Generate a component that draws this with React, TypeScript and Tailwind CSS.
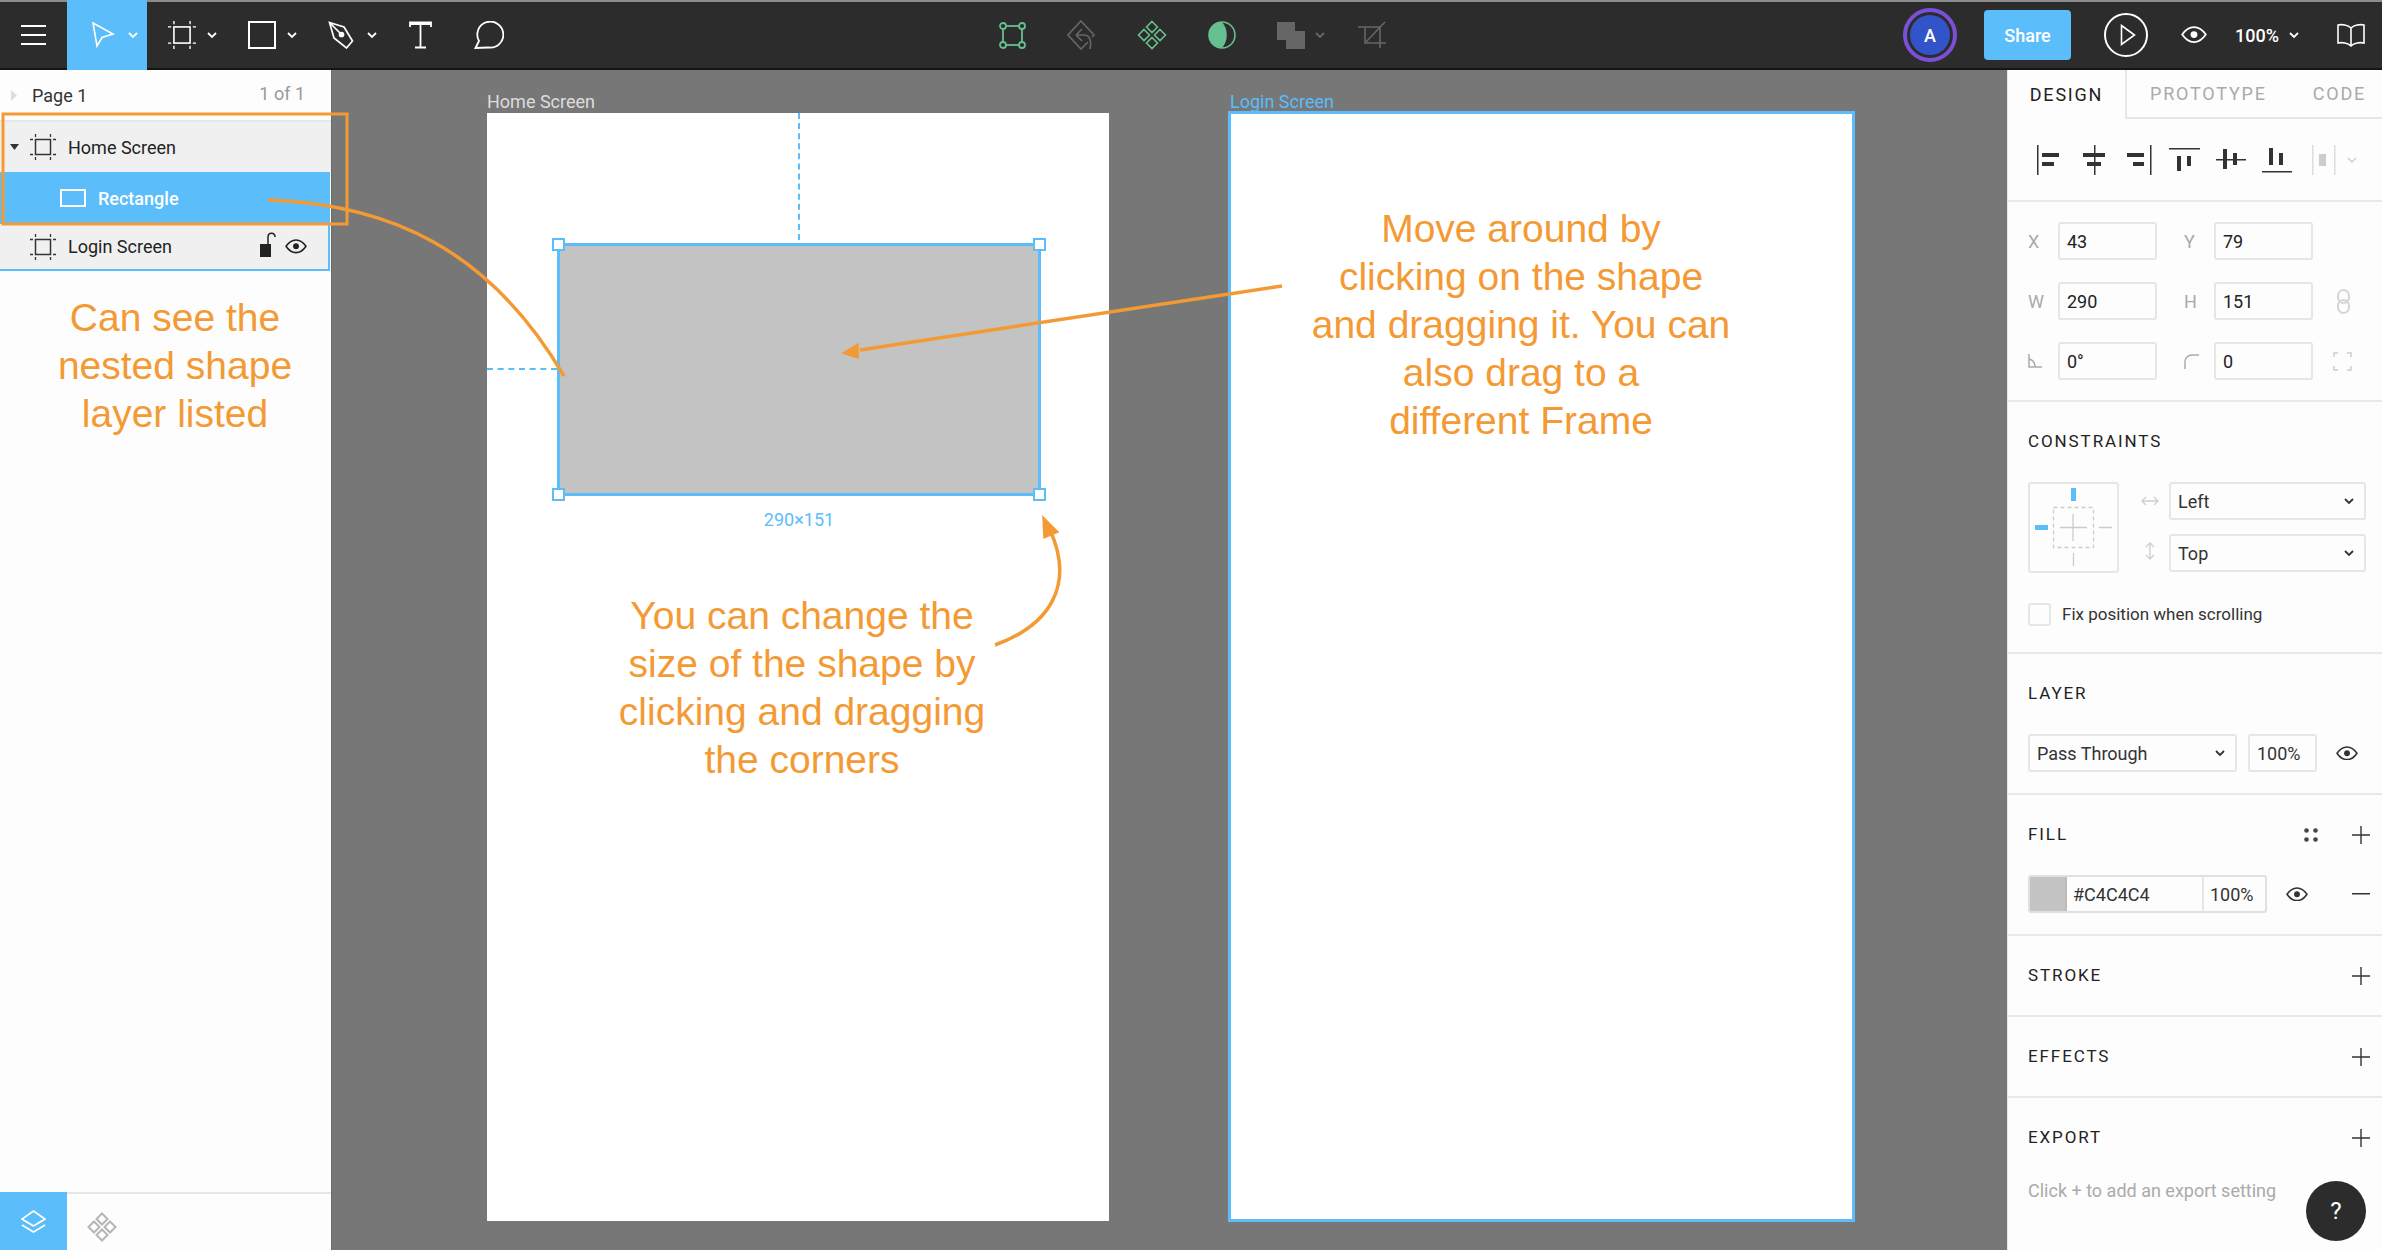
import React from "react";

const Chev = ({ c = "#ffffff", className = "" }: { c?: string; className?: string }) => (
  <svg width="10" height="7" viewBox="0 0 10 7" className={className} fill="none" stroke={c} strokeWidth="1.8">
    <path d="M1 1l4 4 4-4" />
  </svg>
);

const Eye = ({ c = "#333333", w = 22 }: { c?: string; w?: number }) => (
  <svg width={w} height={w * 0.66} viewBox="0 0 24 16" fill="none" stroke={c} strokeWidth="1.7">
    <path d="M1 8c3-4.5 7-7 11-7s8 2.500 11 7c-3 4.500-7 7-11 7S4 12.500 1 8z" />
    <circle cx="12" cy="8" r="3.200" fill={c} stroke="none" />
  </svg>
);

const Plus = () => (
  <svg width="18" height="18" viewBox="0 0 18 18" stroke="#333333" strokeWidth="1.400">
    <path d="M0 9h18M9 0v18" />
  </svg>
);

const FrameIcon = ({ c, s }: { c: string; s: number }) => (
  <svg width={s} height={s} viewBox="0 0 26 26" fill="none" stroke={c} strokeWidth="1.300">
    <rect x="5.500" y="5.500" width="15" height="15" strokeWidth="1.500" />
    <path d="M5.500 0v3M20.500 0v3M5.500 23v3M20.500 23v3M0 5.500h3M0 20.500h3M23 5.500h3M23 20.500h3" />
  </svg>
);

const Diamonds = ({ c, s, sw = 1.6 }: { c: string; s: number; sw?: number }) => (
  <svg width={s} height={s} viewBox="0 0 30 30" fill="none" stroke={c} strokeWidth={sw}>
    <path d="M15 1.500l5.500 5.500-5.500 5.500L9.500 7zM15 17.500l5.500 5.500-5.500 5.500L9.500 23zM7 9.500l5.500 5.500L7 20.500 1.500 15zM23 9.500l5.500 5.500-5.500 5.500L17.500 15z" />
  </svg>
);

const Label = ({ children }: { children: React.ReactNode }) => (
  <span className="w-[30px] text-[18px] text-[#aaaaaa]">{children}</span>
);

const Field = ({ children }: { children: React.ReactNode }) => (
  <div className="flex h-[38px] w-[99px] items-center rounded-[3px] border-2 border-[#e6e6e6] pl-[7px] text-[18px] text-[#222222]">
    {children}
  </div>
);

const SelectBox = ({ children, className }: { children: React.ReactNode; className: string }) => (
  <div className={`flex items-center justify-between rounded-[3px] border-2 border-[#e6e6e6] pl-[7px] pr-[10px] text-[18px] text-[#333333] ${className}`}>
    <span>{children}</span>
    <Chev c="#333333" />
  </div>
);

const Title = ({ children, right }: { children: React.ReactNode; right?: React.ReactNode }) => (
  <div className="flex h-[80px] items-center justify-between pr-[12px] text-[17px] font-normal tracking-[1.900px] text-[#222222]">
    <span>{children}</span>
    {right}
  </div>
);

const Row = ({ className, children }: { className: string; children: React.ReactNode }) => (
  <div className={`flex items-center text-[18px] ${className}`}>{children}</div>
);

export default function App() {
  return (
    <div className="relative flex h-[1250px] w-[2382px] flex-col overflow-hidden bg-[#777777] font-['Roboto',sans-serif]">
      {/* Top bar */}
      <header className="flex h-[70px] shrink-0 items-stretch border-t-2 border-b-2 border-t-[#8c8c8c] border-b-[#151515] bg-[#2c2c2c]">
        <div className="flex w-[67px] items-center justify-center pr-[1px]">
          <svg width="25" height="22" viewBox="0 0 25 22" stroke="#ffffff" strokeWidth="2.200">
            <path d="M0 2h25M0 11h25M0 20h25" />
          </svg>
        </div>
        <div className="flex w-[80px] -mb-[2px] -mt-[2px] items-center bg-[#5bbdfa] pl-[24px]">
          <svg width="24" height="26" viewBox="0 0 24 26" fill="none" stroke="#ffffff" strokeWidth="1.600">
            <path d="M2 1l20 11-11 3.500L6 24z" />
          </svg>
          <Chev className="ml-[13px]" />
        </div>
        <div className="flex items-center pl-[21px]">
          <div className="flex w-[80px] items-center">
            <FrameIcon c="#ffffff" s={28} />
            <Chev className="ml-[11px]" />
          </div>
          <div className="flex w-[80px] items-center">
            <svg width="28" height="28" viewBox="0 0 28 28" fill="none" stroke="#ffffff" strokeWidth="2">
              <rect x="1" y="1" width="26" height="26" />
            </svg>
            <Chev className="ml-[11px]" />
          </div>
          <div className="flex w-[81px] items-center">
            <svg width="28" height="28" viewBox="0 0 28 28" fill="none" stroke="#ffffff" strokeWidth="1.700">
              <path d="M1.500 1.500L16 6l8.500 14-6 7L6 17zM1.500 1.500L13 13" />
              <circle cx="13.500" cy="13.500" r="2" fill="#ffffff" />
            </svg>
            <Chev className="ml-[11px]" />
          </div>
          <div className="flex w-[65px] items-center">
            <svg width="23" height="28" viewBox="0 0 23 28" fill="none" stroke="#ffffff" strokeWidth="1.800">
              <path d="M1 6V1.500h21V6M1 3h21M11.500 2v25M6 26.500h11" />
            </svg>
          </div>
          <svg width="30" height="28" viewBox="0 0 30 28" fill="none" stroke="#ffffff" strokeWidth="1.800">
            <path d="M1.500 27l3.500-7a13 13 0 1 1 9.500 6.500z" />
          </svg>
        </div>
        <div className="ml-[495px] flex items-center">
          <div className="w-[68px]">
            <svg width="27" height="27" viewBox="0 0 27 27" fill="none" stroke="#66bf8f" strokeWidth="1.800">
              <rect x="4" y="4" width="19" height="19" />
              <circle cx="4" cy="4" r="3" fill="#2c2c2c" />
              <circle cx="23" cy="4" r="3" fill="#2c2c2c" />
              <circle cx="4" cy="23" r="3" fill="#2c2c2c" />
              <circle cx="23" cy="23" r="3" fill="#2c2c2c" />
            </svg>
          </div>
          <div className="w-[70px]">
            <svg width="29" height="30" viewBox="0 0 29 30" fill="none" stroke="#666666" strokeWidth="1.700">
              <path d="M21 22l-7 7L1 15 14 1l13 14-2 2M9 15l6-6M9 15l6 6M9 15h8c5 0 8 5 6 14" />
            </svg>
          </div>
          <div className="w-[71px]">
            <Diamonds c="#66bf8f" s={30} />
          </div>
          <div className="w-[69px]">
            <svg width="28" height="28" viewBox="0 0 28 28" fill="none">
              <circle cx="14" cy="14" r="13" stroke="#66bf8f" strokeWidth="1.600" />
              <path d="M14 1a13 13 0 0 0 0 26a20 20 0 0 0 0-26z" fill="#66bf8f" />
            </svg>
          </div>
          <div className="flex w-[81px] items-center">
            <svg width="28" height="27" viewBox="0 0 28 27" fill="#666666">
              <rect x="0" y="0" width="18" height="18" />
              <rect x="9" y="9" width="19" height="18" />
            </svg>
            <Chev c="#666666" className="ml-[10px]" />
          </div>
          <svg width="28" height="28" viewBox="0 0 28 28" fill="none" stroke="#666666" strokeWidth="1.600">
            <path d="M0 6h22v21M7 6v16h21M7 22L27 1" />
          </svg>
        </div>
        <div className="ml-auto flex items-center pr-[16px]">
          <div className="flex h-[54px] w-[54px] items-center justify-center rounded-full border-[4px] border-[#7b50d8]">
            <div className="flex h-[40px] w-[40px] items-center justify-center rounded-full bg-[#3254c8] text-[18px] font-medium text-white">A</div>
          </div>
          <div className="ml-[27px] flex h-[50px] w-[87px] items-center justify-center rounded-[4px] bg-[#5bbdfa] text-[18px] font-medium text-white">Share</div>
          <div className="ml-[33px] flex h-[44px] w-[44px] items-center justify-center rounded-full border-2 border-white pl-[3px]">
            <svg width="16" height="22" viewBox="0 0 16 22" fill="none" stroke="#ffffff" strokeWidth="1.600">
              <path d="M1.500 1.500L14.500 11 1.500 20.500z" />
            </svg>
          </div>
          <div className="ml-[33px]">
            <Eye c="#ffffff" w={26} />
          </div>
          <span className="ml-[28px] text-[18px] font-medium text-white">100%</span>
          <Chev className="ml-[10px]" />
          <svg className="ml-[37px]" width="30" height="24" viewBox="0 0 30 24" fill="none" stroke="#ffffff" strokeWidth="1.600">
            <path d="M15 5C12 2 6 1 2 2v18c4-1 10 0 13 3 3-3 9-4 13-3V2c-4-1-10 0-13 3zM15 5v18" />
          </svg>
        </div>
      </header>

      <div className="flex min-h-0 flex-1">
        {/* Layers panel */}
        <aside className="flex w-[331px] shrink-0 flex-col bg-[#fdfdfd]">
          <div className="flex h-[50px] items-center pr-[26px] text-[#333333]">
            <svg className="ml-[11px]" width="7" height="11" viewBox="0 0 7 11" fill="#dddddd">
              <path d="M0 0l6 5.500L0 11z" />
            </svg>
            <span className="ml-[14px] text-[18px]">Page 1</span>
            <span className="ml-auto -mt-[3px] text-[18px] text-[#999999]">1 of 1</span>
          </div>
          <div className="flex h-[52px] items-center border-t-2 border-[#e6e6e6] bg-[#f0f0f0] text-[#222222]">
            <svg className="ml-[10px]" width="9" height="6" viewBox="0 0 9 6" fill="#333333">
              <path d="M0 0h9L4.500 6z" />
            </svg>
            <span className="ml-[11px]">
              <FrameIcon c="#333333" s={26} />
            </span>
            <span className="ml-[12px] text-[18px]">Home Screen</span>
          </div>
          <div className="flex h-[52px] w-[330px] items-center bg-[#5bbdfa] pl-[60px] text-white">
            <svg width="26" height="18" viewBox="0 0 26 18" fill="none" stroke="#ffffff" strokeWidth="2">
              <rect x="1" y="1" width="24" height="16" />
            </svg>
            <span className="ml-[12px] text-[18px] font-medium">Rectangle</span>
          </div>
          <div className="flex h-[47px] w-[330px] items-center border-r-2 border-b-2 border-[#5bbdfa] bg-[#f0f0f0] pl-[30px] text-[#222222]">
            <FrameIcon c="#333333" s={26} />
            <span className="ml-[12px] text-[18px]">Login Screen</span>
            <svg className="ml-auto -mt-[4px]" width="16" height="27" viewBox="0 0 16 27" fill="none">
              <rect x="0" y="13" width="11" height="13" fill="#222222" />
              <path d="M8 13V6c0-5 7-5 7 0" stroke="#222222" strokeWidth="1.500" />
            </svg>
            <span className="ml-[9px] mr-[21px]">
              <Eye c="#222222" w={22} />
            </span>
          </div>
          <div className="flex-1" />
          <div className="flex h-[58px] border-t-2 border-[#e6e6e6]">
            <div className="-mt-[2px] flex h-[60px] w-[67px] items-center justify-center bg-[#5bbdfa]">
              <svg width="25" height="24" viewBox="0 0 25 24" fill="none" stroke="#ffffff" strokeWidth="1.700">
                <path d="M12.500 1L24 9l-11.500 7L1 9zM1 15l11.500 7L24 15" />
              </svg>
            </div>
            <div className="ml-[20px] mt-[18px]">
              <Diamonds c="#b5b5b5" s={30} sw={2} />
            </div>
          </div>
        </aside>

        {/* Canvas */}
        <main className="relative flex-1 border-l border-[#6a6a6a] bg-[#777777] text-[18px]">
          <span className="absolute left-[155px] top-[18px] text-[#dddddd]">Home Screen</span>
          <div className="absolute left-[155px] top-[43px] h-[1108px] w-[622px] bg-white">
            <div className="absolute left-[311px] top-0 h-[127px] border-l-2 border-dashed border-[#5bbdfa]" />
            <div className="absolute left-0 top-[255px] w-[70px] border-t-2 border-dashed border-[#5bbdfa]" />
            <div className="absolute left-[70px] top-[130px] h-[253px] w-[484px] border-[3px] border-[#5bbdfa] bg-[#c3c3c3]">
              <span className="absolute -left-[8px] -top-[8px] h-[13px] w-[13px] border-2 border-[#5bbdfa] bg-white" />
              <span className="absolute -right-[8px] -top-[8px] h-[13px] w-[13px] border-2 border-[#5bbdfa] bg-white" />
              <span className="absolute -bottom-[8px] -left-[8px] h-[13px] w-[13px] border-2 border-[#5bbdfa] bg-white" />
              <span className="absolute -bottom-[8px] -right-[8px] h-[13px] w-[13px] border-2 border-[#5bbdfa] bg-white" />
              <span className="absolute left-0 right-0 top-[260px] text-center text-[18px] text-[#5bbdfa]">290×151</span>
            </div>
          </div>
          <span className="absolute left-[898px] top-[18px] text-[#5bbdfa]">Login Screen</span>
          <div className="absolute left-[896px] top-[41px] h-[1111px] w-[627px] border-[3px] border-[#5bbdfa] bg-white" />
        </main>

        {/* Properties panel */}
        <aside className="flex w-[375px] shrink-0 flex-col border-l border-[#e6e6e6] bg-[#fdfdfd] text-[#222222]">
          <div className="flex h-[49px] text-[18px] tracking-[1.800px]">
            <div className="flex w-[117px] items-center justify-center rounded-br-none text-[#222222]">DESIGN</div>
            <div className="flex flex-1 items-center border-b-2 border-l-2 border-[#e6e6e6] pl-[23px] text-[#aaaaaa]">
              <span>PROTOTYPE</span>
              <span className="ml-[46px]">CODE</span>
            </div>
          </div>
          <div className="h-[83px] border-b-2 border-[#e9e9e9] pl-[29px] pt-[26px]">
            <svg width="322" height="31" viewBox="0 0 322 31" fill="#333333">
              <rect x="0" y="0" width="1.500" height="30" />
              <rect x="5" y="8" width="17" height="4" />
              <rect x="5" y="17" width="12" height="4" />
              <rect x="57" y="0" width="1.500" height="30" />
              <rect x="46" y="8" width="22" height="4" />
              <rect x="50" y="17" width="14" height="4" />
              <rect x="113" y="0" width="1.500" height="30" />
              <rect x="90" y="8" width="17" height="4" />
              <rect x="96" y="17" width="11" height="4" />
              <rect x="132" y="3" width="31" height="1.500" />
              <rect x="140" y="11" width="4" height="15" />
              <rect x="150" y="11" width="4" height="10" />
              <rect x="179" y="14" width="30" height="1.500" />
              <rect x="186" y="4" width="4" height="20" />
              <rect x="196" y="8" width="4" height="12" />
              <rect x="225" y="26" width="30" height="1.500" />
              <rect x="232" y="3" width="4" height="17" />
              <rect x="242" y="8" width="4" height="12" />
              <rect x="275" y="0" width="1.500" height="30" fill="#dddddd" />
              <rect x="297" y="0" width="1.500" height="30" fill="#dddddd" />
              <rect x="282" y="9" width="7" height="12" fill="#cccccc" />
              <path d="M311 13l4 4 4-4" fill="none" stroke="#cccccc" strokeWidth="1.400" />
            </svg>
          </div>
          <div className="flex h-[200px] flex-col gap-[22px] border-b-2 border-[#e9e9e9] pl-[20px] pt-[20px]">
            <Row className="h-[38px]">
              <Label>X</Label>
              <Field>43</Field>
              <span className="ml-[27px]" />
              <Label>Y</Label>
              <Field>79</Field>
            </Row>
            <Row className="h-[38px]">
              <Label>W</Label>
              <Field>290</Field>
              <span className="ml-[27px]" />
              <Label>H</Label>
              <Field>151</Field>
              <svg className="ml-[24px]" width="13" height="25" viewBox="0 0 13 25" fill="none" stroke="#d5d5d5" strokeWidth="2">
                <rect x="1" y="1" width="11" height="13" rx="5.500" />
                <rect x="1" y="11" width="11" height="13" rx="5.500" />
              </svg>
            </Row>
            <Row className="h-[38px]">
              <Label>
                <svg width="14" height="14" viewBox="0 0 14 14" fill="none" stroke="#aaaaaa" strokeWidth="1.500">
                  <path d="M1 0v13h13M1 5c4 1 6 4 6 8" />
                </svg>
              </Label>
              <Field>0°</Field>
              <span className="ml-[27px]" />
              <Label>
                <svg width="15" height="15" viewBox="0 0 15 15" fill="none" stroke="#aaaaaa" strokeWidth="1.500">
                  <path d="M1 15V8c0-4 3-7 7-7h7" />
                </svg>
              </Label>
              <Field>0</Field>
              <svg className="ml-[20px]" width="19" height="19" viewBox="0 0 19 19" fill="none" stroke="#cccccc" strokeWidth="1.500">
                <path d="M1 5V1h4M14 1h4v4M18 14v4h-4M5 18H1v-4" />
              </svg>
            </Row>
          </div>
          <div className="h-[252px] border-b-2 border-[#e9e9e9] pl-[20px]">
            <Title>CONSTRAINTS</Title>
            <div className="flex">
              <div className="h-[91px] w-[91px] rounded-[3px] border-2 border-[#e6e6e6]">
                <svg width="87" height="87" viewBox="2 2 87 87" fill="none">
                  <rect x="25.500" y="25.500" width="40" height="40" stroke="#cccccc" strokeWidth="1.300" strokeDasharray="4 3" />
                  <path d="M45 32v27M32 45.500h27M71 45.500h13M45.500 71v13" stroke="#cccccc" strokeWidth="1.300" />
                  <rect x="43" y="6" width="5" height="13" fill="#5bbdfa" />
                  <rect x="7" y="43" width="13" height="5" fill="#5bbdfa" />
                </svg>
              </div>
              <div className="ml-[22px] flex h-[91px] w-[18px] flex-col items-center justify-between py-[13px]">
                <svg width="18" height="12" viewBox="0 0 18 12" fill="none" stroke="#d0d0d0" strokeWidth="1.400">
                  <path d="M1 6h16M5 2L1 6l4 4M13 2l4 4-4 4" />
                </svg>
                <svg width="12" height="18" viewBox="0 0 12 18" fill="none" stroke="#d0d0d0" strokeWidth="1.400">
                  <path d="M6 1v16M2 5l4-4 4 4M2 13l4 4 4-4" />
                </svg>
              </div>
              <div className="ml-[10px] flex flex-col gap-[14px]">
                <SelectBox className="h-[38px] w-[197px]">Left</SelectBox>
                <SelectBox className="h-[38px] w-[197px]">Top</SelectBox>
              </div>
            </div>
            <div className="mt-[29px] flex items-center">
              <span className="h-[23px] w-[23px] rounded-[3px] border-2 border-[#e6e6e6]" />
              <span className="ml-[11px] text-[17px] text-[#333333]">Fix position when scrolling</span>
            </div>
          </div>
          <div className="h-[141px] border-b-2 border-[#e9e9e9] pl-[20px]">
            <Title>LAYER</Title>
            <div className="flex items-center">
              <SelectBox className="h-[38px] w-[209px]">Pass Through</SelectBox>
              <div className="ml-[11px] flex h-[38px] w-[69px] items-center rounded-[3px] border-2 border-[#e6e6e6] pl-[7px] text-[18px] text-[#333333]">100%</div>
              <span className="ml-[19px]">
                <Eye c="#333333" w={22} />
              </span>
            </div>
          </div>
          <div className="h-[141px] border-b-2 border-[#e9e9e9] pl-[20px]">
            <Title
              right={
                <div className="flex items-center">
                  <svg width="14" height="14" viewBox="0 0 14 14" fill="#444444">
                    <circle cx="2.500" cy="2.500" r="2.300" />
                    <circle cx="11.500" cy="2.500" r="2.300" />
                    <circle cx="2.500" cy="11.500" r="2.300" />
                    <circle cx="11.500" cy="11.500" r="2.300" />
                  </svg>
                  <span className="ml-[34px]">
                    <Plus />
                  </span>
                </div>
              }
            >
              FILL
            </Title>
            <div className="flex items-center pr-[12px]">
              <div className="flex h-[38px] w-[239px] items-stretch overflow-hidden rounded-[3px] border-2 border-[#e0e0e0] text-[18px] text-[#333333]">
                <div className="w-[37px] border-r-2 border-[#bbbbbb] bg-[#c4c4c4]" />
                <div className="flex w-[135px] items-center pl-[6px]">#C4C4C4</div>
                <div className="flex flex-1 items-center border-l-2 border-[#e6e6e6] pl-[6px]">100%</div>
              </div>
              <span className="ml-[19px]">
                <Eye c="#333333" w={22} />
              </span>
              <svg className="ml-auto" width="18" height="2" viewBox="0 0 18 2" fill="#333333">
                <rect width="18" height="1.500" />
              </svg>
            </div>
          </div>
          <div className="h-[81px] border-b-2 border-[#e9e9e9] pl-[20px]">
            <Title right={<Plus />}>STROKE</Title>
          </div>
          <div className="h-[81px] border-b-2 border-[#e9e9e9] pl-[20px]">
            <Title right={<Plus />}>EFFECTS</Title>
          </div>
          <div className="flex-1 pl-[20px]">
            <Title right={<Plus />}>EXPORT</Title>
            <div className="-mt-[1px] text-[18px] text-[#aaaaaa]">Click + to add an export setting</div>
          </div>
        </aside>
      </div>

      {/* Help button */}
      <div className="absolute left-[2306px] top-[1181px] flex h-[60px] w-[60px] items-center justify-center rounded-full bg-[#2c2c2c] text-[24px] text-white">?</div>

      {/* Annotations */}
      <svg className="pointer-events-none absolute left-0 top-0" width="2382" height="1250" viewBox="0 0 2382 1250" fill="none">
        <rect x="3" y="114" width="344" height="110" stroke="#f49a35" strokeWidth="3" />
        <path d="M268 200C350 204 410 225 470 282C510 320 545 370 564 376" stroke="#f49a35" strokeWidth="3" style={{ display: "none" }} />
        <path d="M268 200C390 204 490 250 564 376" stroke="#f49a35" strokeWidth="3.500" />
        <path d="M1282 286L860 350" stroke="#f49a35" strokeWidth="3.500" />
        <path d="M843 353L858 344L858 358Z" fill="#f49a35" stroke="#f49a35" strokeWidth="1.500" />
        <path d="M995 645C1050 625 1075 585 1050 530" stroke="#f49a35" strokeWidth="3.500" />
        <path d="M1043 517L1058 532L1044 538Z" fill="#f49a35" stroke="#f49a35" strokeWidth="1.500" />
      </svg>
      <div className="absolute left-[25px] top-[294px] w-[300px] text-center font-['Liberation_Sans',sans-serif] text-[39px] leading-[48px] text-[#f49a35]">
        Can see the<br />nested shape<br />layer listed
      </div>
      <div className="absolute left-[602px] top-[592px] w-[400px] text-center font-['Liberation_Sans',sans-serif] text-[39px] leading-[48px] text-[#f49a35]">
        You can change the<br />size of the shape by<br />clicking and dragging<br />the corners
      </div>
      <div className="absolute left-[1271px] top-[205px] w-[500px] text-center font-['Liberation_Sans',sans-serif] text-[39px] leading-[48px] text-[#f49a35]">
        Move around by<br />clicking on the shape<br />and dragging it. You can<br />also drag to a<br />different Frame
      </div>
    </div>
  );
}
